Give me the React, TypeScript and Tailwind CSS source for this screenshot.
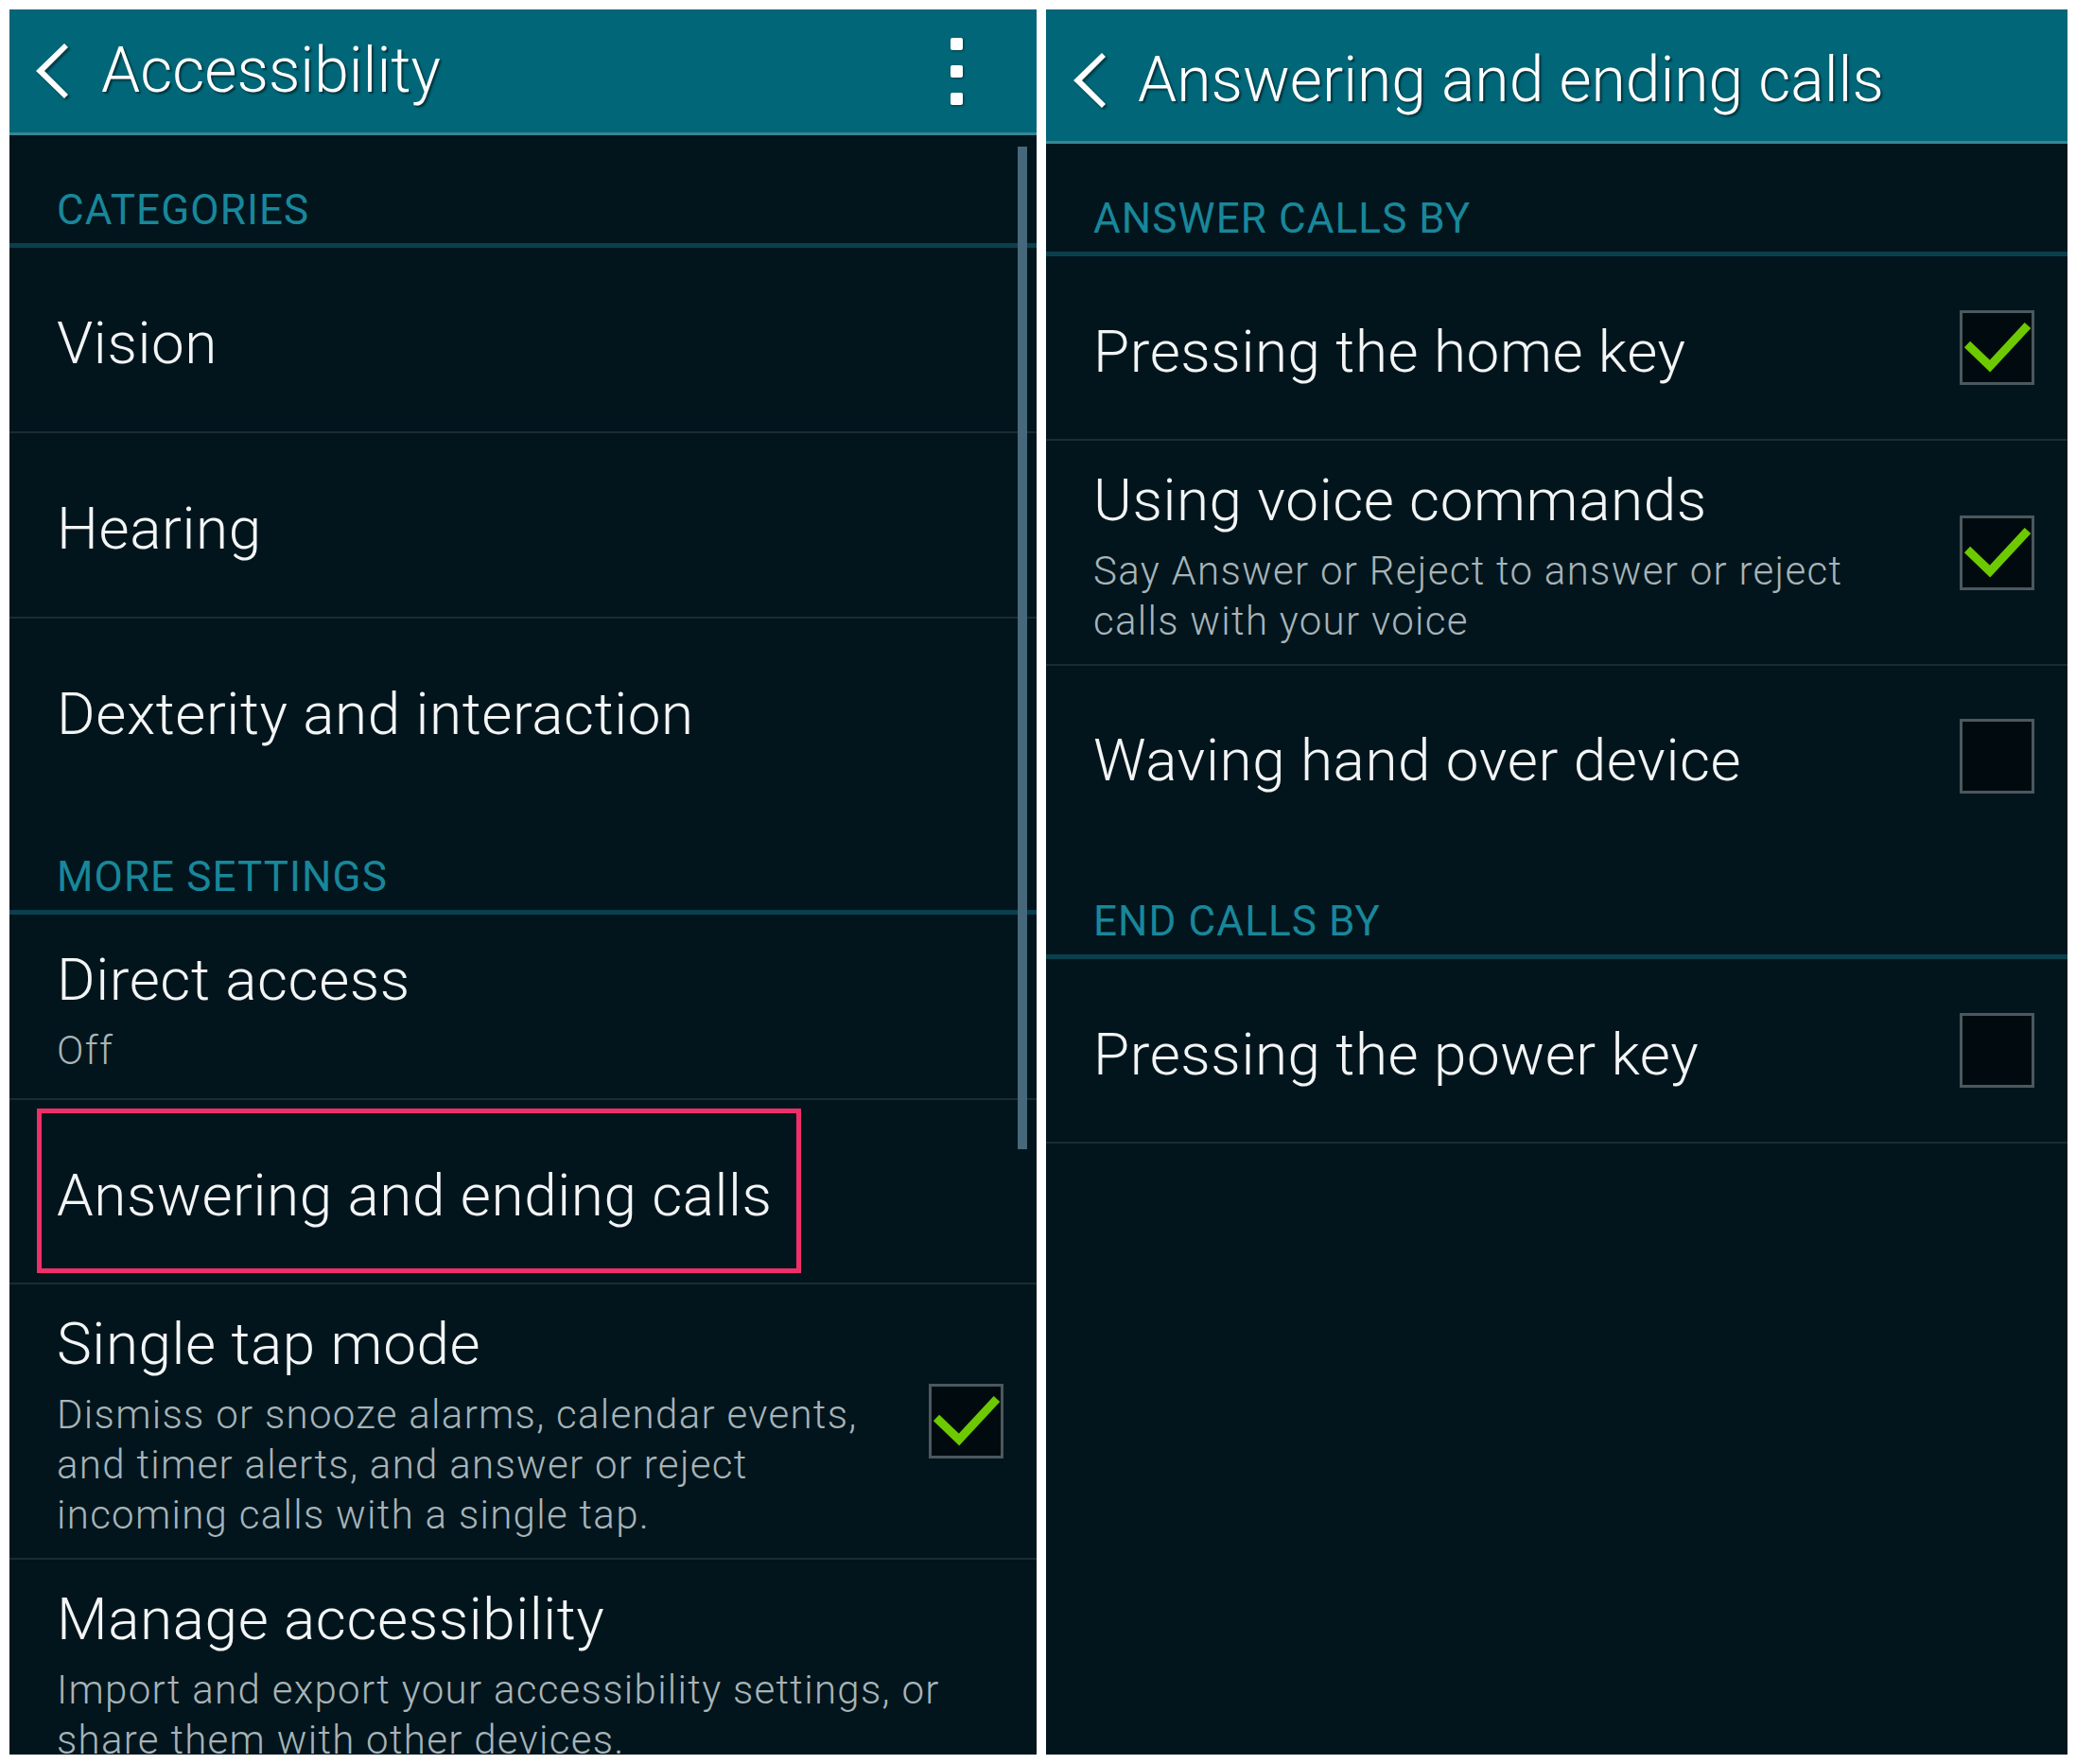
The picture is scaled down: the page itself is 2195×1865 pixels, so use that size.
import React from "react";

function BackArrow() {
  return (
    <svg width="34" height="58" viewBox="0 0 34 58" className="shrink-0 drop-shadow-[2px_2px_1px_rgba(0,0,0,0.45)]">
      <polygon points="30,0 0,29 30,58 34,54 9,29 34,4" fill="#ffffff" />
    </svg>
  );
}

function Kebab() {
  return (
    <div className="flex flex-col gap-[16px] drop-shadow-[1px_1px_1px_rgba(0,0,0,0.45)]">
      <div className="w-[13px] h-[13px] bg-white rounded-[2px]" />
      <div className="w-[13px] h-[13px] bg-white rounded-[2px]" />
      <div className="w-[13px] h-[13px] bg-white rounded-[2px]" />
    </div>
  );
}

function Checkbox({ checked }: { checked: boolean }) {
  return (
    <div className="w-[79px] h-[79px] shrink-0 border-[3px] border-[#4b585d] bg-[#010b0f] flex items-center justify-center">
      {checked ? (
        <svg width="73" height="73" viewBox="0 0 73 73">
          <polyline
            points="5,33 29,56 69,13"
            fill="none"
            stroke="#6dc900"
            strokeWidth="9"
            strokeLinecap="butt"
            strokeLinejoin="miter"
          />
        </svg>
      ) : null}
    </div>
  );
}

function SectionHeader({ label }: { label: string }) {
  return (
    <div className="shrink-0">
      <div className="h-[114px] flex items-end pl-[50px] pb-[13px]">
        <span className="text-[44px] leading-[44px] font-normal text-[#19879a] tracking-[1.1px]">{label}</span>
      </div>
      <div className="h-[5px] bg-[#0a3f4c]" />
    </div>
  );
}

function Item({
  title,
  sub,
  checked,
  divider = true,
  minH = "min-h-[196px]",
  highlight = false,
}: {
  title: string;
  sub?: string[];
  checked?: boolean;
  divider?: boolean;
  minH?: string;
  highlight?: boolean;
}) {
  return (
    <div
      className={`relative shrink-0 flex items-center pt-[27px] pb-[19px] pl-[50px] pr-[35px] ${minH} ${
        divider ? "border-b-2 border-[#1d2b31]" : ""
      }`}
    >
      <div className="flex-1 min-w-0">
        <div className="text-[62px] leading-[72px] font-light tracking-[0.6px] text-[#f3f5f5] whitespace-nowrap">
          {title}
        </div>
        {sub ? (
          <div className="mt-[12px] text-[42px] leading-[53px] font-light tracking-[1.3px] text-[#a7b4b8] whitespace-nowrap">
            {sub.map((s, i) => (
              <div key={i}>{s}</div>
            ))}
          </div>
        ) : null}
      </div>
      {checked !== undefined ? (
        <div className="-translate-y-[4px]">
          <Checkbox checked={checked} />
        </div>
      ) : null}
      {highlight ? (
        <div className="absolute left-[29px] top-[9px] w-[808px] h-[174px] border-[5px] border-[#ef2f6a] pointer-events-none" />
      ) : null}
    </div>
  );
}

export default function App() {
  return (
    <div className="w-[2195px] h-[1865px] bg-white flex gap-[10px] pt-[10px] pl-[10px] font-['Roboto',sans-serif]">
      {/* Left panel */}
      <div className="relative w-[1086px] h-[1845px] bg-[#02151d] overflow-hidden flex flex-col">
        <div className="shrink-0">
          <div className="h-[130px] bg-[#006678] flex items-center pl-[28px] pr-[78px]">
            <BackArrow />
            <span className="ml-[35px] flex-1 text-[66px] leading-none font-light text-white [text-shadow:2px_2px_2px_rgba(0,0,0,0.5)]">
              Accessibility
            </span>
            <Kebab />
          </div>
          <div className="h-[3px] bg-[#3a8592]" />
        </div>
        <SectionHeader label="CATEGORIES" />
        <Item title="Vision" />
        <Item title="Hearing" />
        <Item title="Dexterity and interaction" divider={false} minH="min-h-[194px]" />
        <SectionHeader label="MORE SETTINGS" />
        <Item title="Direct access" sub={["Off"]} />
        <Item title="Answering and ending calls" minH="min-h-[195px]" highlight />
        <Item
          title="Single tap mode"
          sub={[
            "Dismiss or snooze alarms, calendar events,",
            "and timer alerts, and answer or reject",
            "incoming calls with a single tap.",
          ]}
          checked={true}
        />
        <Item
          title="Manage accessibility"
          sub={["Import and export your accessibility settings, or", "share them with other devices."]}
          divider={false}
        />
        <div className="absolute left-[1066px] top-[145px] w-[10px] h-[1060px] bg-[#46687a]" />
      </div>

      {/* Right panel */}
      <div className="w-[1080px] h-[1845px] bg-[#02151d] overflow-hidden flex flex-col">
        <div className="shrink-0">
          <div className="h-[139px] bg-[#006678] flex items-center pl-[29px] pt-[10px]">
            <BackArrow />
            <span className="ml-[34px] text-[66px] leading-none font-light text-white [text-shadow:2px_2px_2px_rgba(0,0,0,0.5)]">
              Answering and ending calls
            </span>
          </div>
          <div className="h-[3px] bg-[#3a8592]" />
        </div>
        <SectionHeader label="ANSWER CALLS BY" />
        <Item title="Pressing the home key" checked={true} minH="min-h-[195px]" />
        <Item
          title="Using voice commands"
          sub={["Say Answer or Reject to answer or reject", "calls with your voice"]}
          checked={true}
        />
        <Item title="Waving hand over device" checked={false} divider={false} minH="min-h-[191px]" />
        <SectionHeader label="END CALLS BY" />
        <Item title="Pressing the power key" checked={false} minH="min-h-[195px]" />
      </div>
    </div>
  );
}
